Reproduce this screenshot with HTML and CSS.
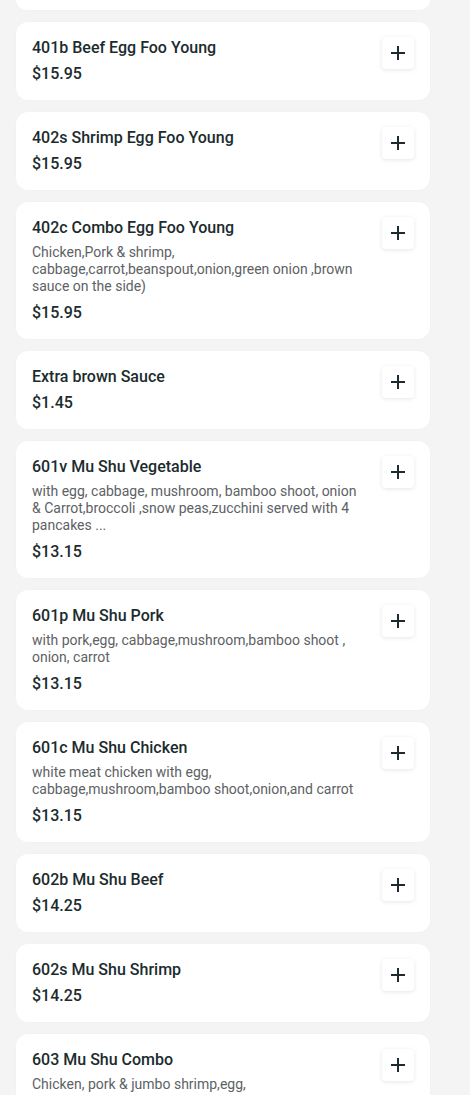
FILE: index.html
```html
<!DOCTYPE html>
<html lang="en">
<head>
<meta charset="utf-8">
<title>Menu</title>
<link rel="stylesheet" href="styles.css">
</head>
<body>
<div class="list">
  <div class="card stub"></div>

  <div class="card">
    <div class="info">
      <div class="title">401b Beef Egg Foo Young</div>
      <div class="price">$15.95</div>
    </div>
    <button class="add" aria-label="Add"><svg viewBox="0 0 16 16" width="16" height="16"><path d="M8 1v14M1 8h14" stroke="currentColor" stroke-width="2" fill="none"/></svg></button>
  </div>

  <div class="card">
    <div class="info">
      <div class="title">402s Shrimp Egg Foo Young</div>
      <div class="price">$15.95</div>
    </div>
    <button class="add" aria-label="Add"><svg viewBox="0 0 16 16" width="16" height="16"><path d="M8 1v14M1 8h14" stroke="currentColor" stroke-width="2" fill="none"/></svg></button>
  </div>

  <div class="card">
    <div class="info">
      <div class="title">402c Combo Egg Foo Young</div>
      <div class="desc">Chicken,Pork &amp; shrimp, cabbage,carrot,beanspout,onion,green onion ,brown sauce on the side)</div>
      <div class="price">$15.95</div>
    </div>
    <button class="add" aria-label="Add"><svg viewBox="0 0 16 16" width="16" height="16"><path d="M8 1v14M1 8h14" stroke="currentColor" stroke-width="2" fill="none"/></svg></button>
  </div>

  <div class="card">
    <div class="info">
      <div class="title">Extra brown Sauce</div>
      <div class="price">$1.45</div>
    </div>
    <button class="add" aria-label="Add"><svg viewBox="0 0 16 16" width="16" height="16"><path d="M8 1v14M1 8h14" stroke="currentColor" stroke-width="2" fill="none"/></svg></button>
  </div>

  <div class="card">
    <div class="info">
      <div class="title">601v Mu Shu Vegetable</div>
      <div class="desc">with egg, cabbage, mushroom, bamboo shoot, onion &amp; Carrot,broccoli ,snow peas,zucchini served with 4 pancakes ...</div>
      <div class="price">$13.15</div>
    </div>
    <button class="add" aria-label="Add"><svg viewBox="0 0 16 16" width="16" height="16"><path d="M8 1v14M1 8h14" stroke="currentColor" stroke-width="2" fill="none"/></svg></button>
  </div>

  <div class="card">
    <div class="info">
      <div class="title">601p Mu Shu Pork</div>
      <div class="desc">with pork,egg, cabbage,mushroom,bamboo shoot , onion, carrot</div>
      <div class="price">$13.15</div>
    </div>
    <button class="add" aria-label="Add"><svg viewBox="0 0 16 16" width="16" height="16"><path d="M8 1v14M1 8h14" stroke="currentColor" stroke-width="2" fill="none"/></svg></button>
  </div>

  <div class="card">
    <div class="info">
      <div class="title">601c Mu Shu Chicken</div>
      <div class="desc">white meat chicken with egg, cabbage,mushroom,bamboo shoot,onion,and carrot</div>
      <div class="price">$13.15</div>
    </div>
    <button class="add" aria-label="Add"><svg viewBox="0 0 16 16" width="16" height="16"><path d="M8 1v14M1 8h14" stroke="currentColor" stroke-width="2" fill="none"/></svg></button>
  </div>

  <div class="card">
    <div class="info">
      <div class="title">602b Mu Shu Beef</div>
      <div class="price">$14.25</div>
    </div>
    <button class="add" aria-label="Add"><svg viewBox="0 0 16 16" width="16" height="16"><path d="M8 1v14M1 8h14" stroke="currentColor" stroke-width="2" fill="none"/></svg></button>
  </div>

  <div class="card">
    <div class="info">
      <div class="title">602s Mu Shu Shrimp</div>
      <div class="price">$14.25</div>
    </div>
    <button class="add" aria-label="Add"><svg viewBox="0 0 16 16" width="16" height="16"><path d="M8 1v14M1 8h14" stroke="currentColor" stroke-width="2" fill="none"/></svg></button>
  </div>

  <div class="card">
    <div class="info">
      <div class="title">603 Mu Shu Combo</div>
      <div class="desc">Chicken, pork &amp; jumbo shrimp,egg, cabbage,mushroom,bamboo shoot,onion,and carrot</div>
      <div class="price">$15.95</div>
    </div>
    <button class="add" aria-label="Add"><svg viewBox="0 0 16 16" width="16" height="16"><path d="M8 1v14M1 8h14" stroke="currentColor" stroke-width="2" fill="none"/></svg></button>
  </div>
</div>
</body>
</html>
```
FILE: styles.css
```css
html, body {
  margin: 0;
  padding: 0;
  background: #f4f4f4;
}
body {
  font-family: Roboto, "Liberation Sans", sans-serif;
  color: #1b2b2e;
  height: 1095px;
  overflow: hidden;
}
.list {
  display: flex;
  flex-direction: column;
  gap: 12px;
  width: 414px;
  padding: 0 0 0 16px;
}
.card {
  display: flex;
  align-items: flex-start;
  gap: 16px;
  background: #ffffff;
  border-radius: 12px;
  padding: 16px;
  box-shadow: 0 0 2px rgba(0, 0, 0, 0.03);
}
.card.stub {
  height: 10px;
  padding: 0;
  border-radius: 0 0 12px 12px;
}
.info {
  flex: 1;
  min-width: 0;
  display: flex;
  flex-direction: column;
}
.title {
  font-size: 16px;
  line-height: 20px;
  font-weight: 500;
  color: #1b2b2e;
}
.desc {
  margin: 6px 0 2px;
  font-size: 14px;
  line-height: 17px;
  color: #5d6265;
}
.price {
  margin-top: 6px;
  font-size: 16px;
  line-height: 20px;
  font-weight: 500;
  color: #1b2b2e;
}
.add {
  flex: none;
  width: 32px;
  height: 32px;
  margin: -1px 0 0;
  padding: 0;
  border: none;
  border-radius: 4px;
  background: #ffffff;
  color: #1b2b2e;
  display: flex;
  align-items: center;
  justify-content: center;
  box-shadow: 0 1px 4px rgba(0, 0, 0, 0.10);
  cursor: pointer;
}
.add svg {
  display: block;
}
```
